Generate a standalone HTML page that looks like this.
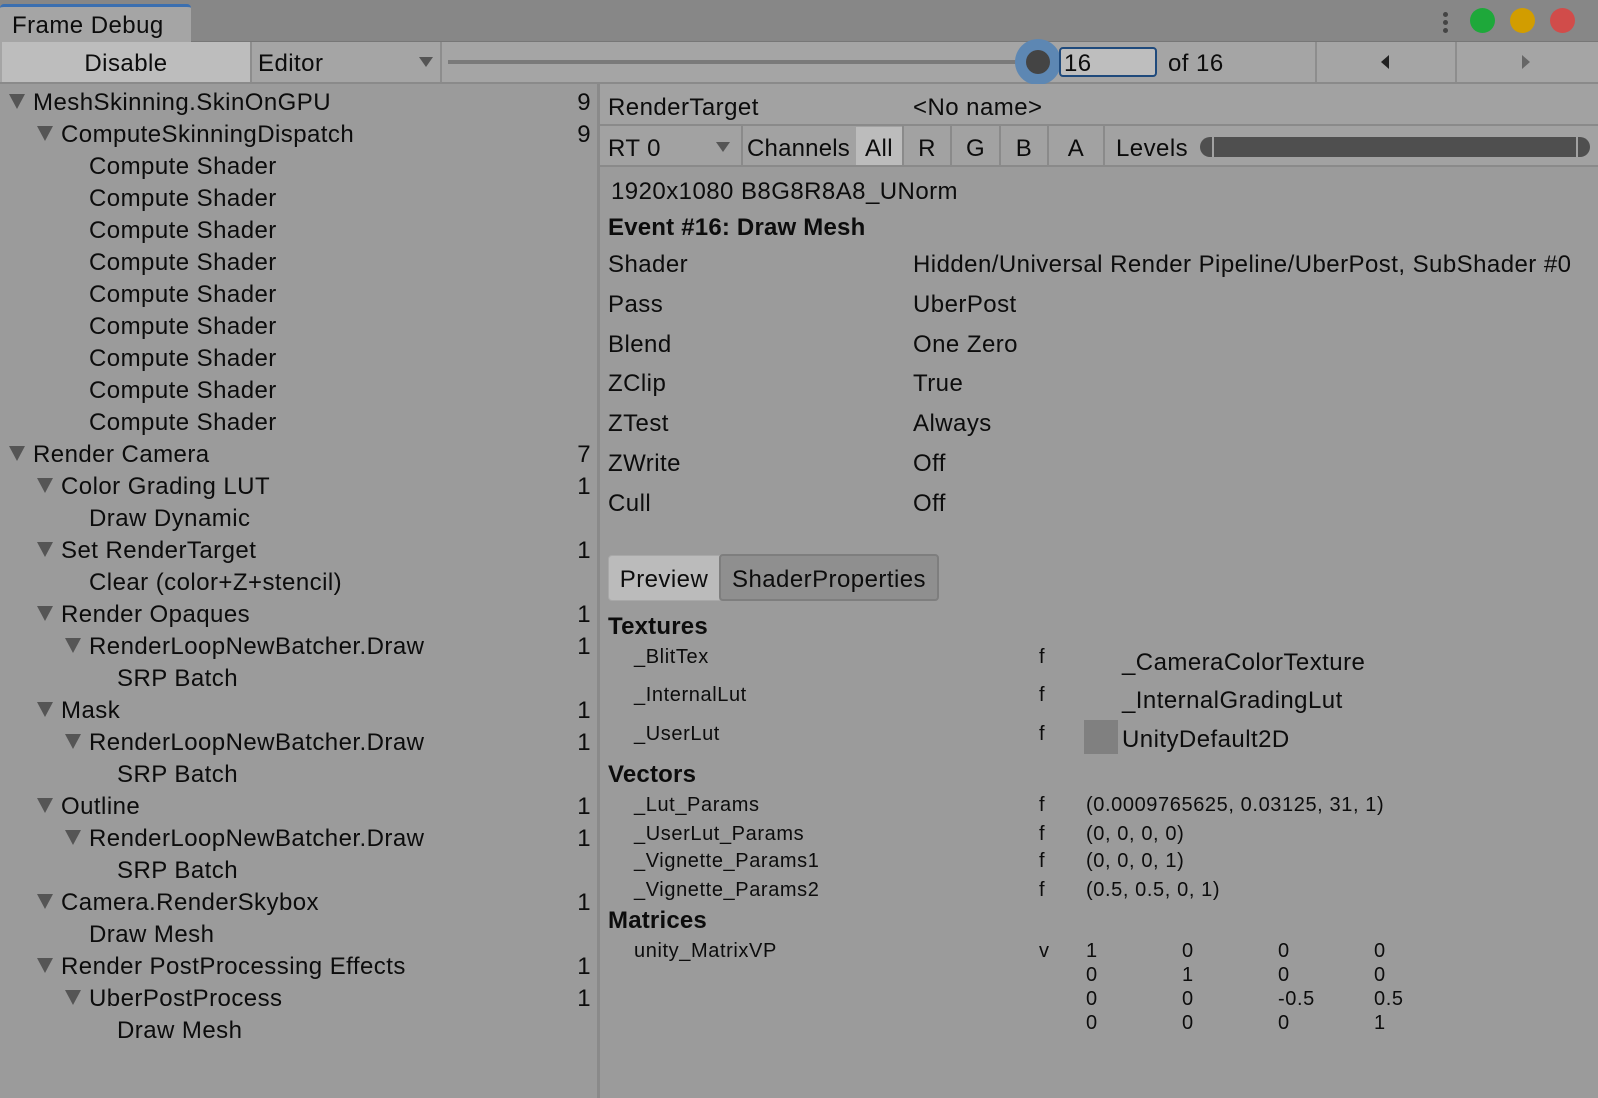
<!DOCTYPE html>
<html><head><meta charset="utf-8"><style>
*{margin:0;padding:0;box-sizing:border-box}
body{width:1598px;height:1098px;overflow:hidden;background:#9b9b9b;font-family:"Liberation Sans",sans-serif;color:#0c0c0c;position:relative}
.a{position:absolute}
.t{position:absolute;white-space:nowrap;line-height:30px;height:30px;transform:translateY(-44%);font-size:24px;letter-spacing:0.45px}
.s{font-size:20px;letter-spacing:0.6px}
.b{font-weight:bold;letter-spacing:0.2px}
.tri{position:absolute;width:0;height:0;border-left:8px solid transparent;border-right:8px solid transparent;border-top:15px solid #555}
.r{text-align:right}
</style></head><body>
<!-- title bar -->
<div class="a" style="left:0;top:0;width:1598px;height:42px;background:#878787;border-bottom:1px solid #777"></div>
<div class="a" style="left:0;top:4px;width:191px;height:39px;background:#a5a5a5;border-top:3px solid #3b6fb0;border-radius:4px 4px 0 0"></div>
<div class="t" style="left:12px;top:24px;">Frame Debug</div>
<div class="a" style="left:1443px;top:12px;width:5px;height:5px;border-radius:50%;background:#444"></div>
<div class="a" style="left:1443px;top:20px;width:5px;height:5px;border-radius:50%;background:#444"></div>
<div class="a" style="left:1443px;top:28px;width:5px;height:5px;border-radius:50%;background:#444"></div>
<div class="a" style="left:1470px;top:8px;width:25px;height:25px;border-radius:50%;background:#1ea83a"></div>
<div class="a" style="left:1510px;top:8px;width:25px;height:25px;border-radius:50%;background:#d29d00"></div>
<div class="a" style="left:1550px;top:8px;width:25px;height:25px;border-radius:50%;background:#d14c4a"></div>
<!-- toolbar -->
<div class="a" style="left:0;top:42px;width:1598px;height:42px;background:#a5a5a5;border-bottom:2px solid #8a8a8a"></div>
<div class="a" style="left:2px;top:42px;width:248px;height:40px;background:#bdbdbd"></div>
<div class="t" style="left:2px;width:248px;text-align:center;top:62px">Disable</div>
<div class="a" style="left:250px;top:42px;width:2px;height:40px;background:#8d8d8d"></div>
<div class="t" style="left:258px;top:62px">Editor</div>
<div class="a" style="left:419px;top:57px;border-left:7px solid transparent;border-right:7px solid transparent;border-top:10px solid #555"></div>
<div class="a" style="left:440px;top:42px;width:2px;height:40px;background:#8d8d8d"></div>
<div class="a" style="left:448px;top:60px;width:580px;height:4px;background:#7a7a7a"></div>
<div class="a" style="left:1015px;top:39px;width:46px;height:46px;border-radius:50%;background:#5d87b3"></div>
<div class="a" style="left:1026px;top:50px;width:24px;height:24px;border-radius:50%;background:#444"></div>
<div class="a" style="left:1059px;top:47px;width:98px;height:30px;background:#bebebe;border:2px solid #1f4a7c;border-radius:4px"></div>
<div class="t" style="left:1064px;top:62px">16</div>
<div class="t" style="left:1168px;top:62px">of 16</div>
<div class="a" style="left:1315px;top:42px;width:2px;height:40px;background:#8d8d8d"></div>
<div class="a" style="left:1455px;top:42px;width:2px;height:40px;background:#8d8d8d"></div>
<div class="a" style="left:1381px;top:55px;border-top:7px solid transparent;border-bottom:7px solid transparent;border-right:8px solid #222"></div>
<div class="a" style="left:1522px;top:55px;border-top:7px solid transparent;border-bottom:7px solid transparent;border-left:8px solid #666"></div>
<!-- divider -->
<div class="a" style="left:597px;top:84px;width:3px;height:1014px;background:#8a8a8a"></div>
<!-- tree -->
<div class="tri" style="left:9px;top:94px"></div><div class="t" style="left:33px;top:101px">MeshSkinning.SkinOnGPU</div><div class="t r" style="left:560px;width:31px;top:101px">9</div>
<div class="tri" style="left:37px;top:126px"></div><div class="t" style="left:61px;top:133px">ComputeSkinningDispatch</div><div class="t r" style="left:560px;width:31px;top:133px">9</div>
<div class="t" style="left:89px;top:165px">Compute Shader</div>
<div class="t" style="left:89px;top:197px">Compute Shader</div>
<div class="t" style="left:89px;top:229px">Compute Shader</div>
<div class="t" style="left:89px;top:261px">Compute Shader</div>
<div class="t" style="left:89px;top:293px">Compute Shader</div>
<div class="t" style="left:89px;top:325px">Compute Shader</div>
<div class="t" style="left:89px;top:357px">Compute Shader</div>
<div class="t" style="left:89px;top:389px">Compute Shader</div>
<div class="t" style="left:89px;top:421px">Compute Shader</div>
<div class="tri" style="left:9px;top:446px"></div><div class="t" style="left:33px;top:453px">Render Camera</div><div class="t r" style="left:560px;width:31px;top:453px">7</div>
<div class="tri" style="left:37px;top:478px"></div><div class="t" style="left:61px;top:485px">Color Grading LUT</div><div class="t r" style="left:560px;width:31px;top:485px">1</div>
<div class="t" style="left:89px;top:517px">Draw Dynamic</div>
<div class="tri" style="left:37px;top:542px"></div><div class="t" style="left:61px;top:549px">Set RenderTarget</div><div class="t r" style="left:560px;width:31px;top:549px">1</div>
<div class="t" style="left:89px;top:581px">Clear (color+Z+stencil)</div>
<div class="tri" style="left:37px;top:606px"></div><div class="t" style="left:61px;top:613px">Render Opaques</div><div class="t r" style="left:560px;width:31px;top:613px">1</div>
<div class="tri" style="left:65px;top:638px"></div><div class="t" style="left:89px;top:645px">RenderLoopNewBatcher.Draw</div><div class="t r" style="left:560px;width:31px;top:645px">1</div>
<div class="t" style="left:117px;top:677px">SRP Batch</div>
<div class="tri" style="left:37px;top:702px"></div><div class="t" style="left:61px;top:709px">Mask</div><div class="t r" style="left:560px;width:31px;top:709px">1</div>
<div class="tri" style="left:65px;top:734px"></div><div class="t" style="left:89px;top:741px">RenderLoopNewBatcher.Draw</div><div class="t r" style="left:560px;width:31px;top:741px">1</div>
<div class="t" style="left:117px;top:773px">SRP Batch</div>
<div class="tri" style="left:37px;top:798px"></div><div class="t" style="left:61px;top:805px">Outline</div><div class="t r" style="left:560px;width:31px;top:805px">1</div>
<div class="tri" style="left:65px;top:830px"></div><div class="t" style="left:89px;top:837px">RenderLoopNewBatcher.Draw</div><div class="t r" style="left:560px;width:31px;top:837px">1</div>
<div class="t" style="left:117px;top:869px">SRP Batch</div>
<div class="tri" style="left:37px;top:894px"></div><div class="t" style="left:61px;top:901px">Camera.RenderSkybox</div><div class="t r" style="left:560px;width:31px;top:901px">1</div>
<div class="t" style="left:89px;top:933px">Draw Mesh</div>
<div class="tri" style="left:37px;top:958px"></div><div class="t" style="left:61px;top:965px">Render PostProcessing Effects</div><div class="t r" style="left:560px;width:31px;top:965px">1</div>
<div class="tri" style="left:65px;top:990px"></div><div class="t" style="left:89px;top:997px">UberPostProcess</div><div class="t r" style="left:560px;width:31px;top:997px">1</div>
<div class="t" style="left:117px;top:1029px">Draw Mesh</div>
<!-- right header -->
<div class="a" style="left:600px;top:84px;width:998px;height:42px;background:#a2a2a2;border-bottom:2px solid #8a8a8a"></div>
<div class="t" style="left:608px;top:106px">RenderTarget</div>
<div class="t" style="left:913px;top:106px">&lt;No name&gt;</div>
<div class="a" style="left:600px;top:126px;width:998px;height:41px;background:#a2a2a2;border-bottom:2px solid #8a8a8a"></div>
<div class="t" style="left:608px;top:147px">RT 0</div>
<div class="a" style="left:716px;top:142px;border-left:7px solid transparent;border-right:7px solid transparent;border-top:10px solid #555"></div>
<div class="a" style="left:741px;top:126px;width:2px;height:40px;background:#8a8a8a"></div>
<div class="t" style="left:747px;top:147px;letter-spacing:0.2px">Channels</div>
<div class="a" style="left:856px;top:127px;width:46px;height:38px;background:#bcbcbc"></div>
<div class="t" style="left:856px;width:46px;text-align:center;top:147px">All</div>
<div class="a" style="left:902px;top:126px;width:2px;height:40px;background:#8a8a8a"></div>
<div class="t" style="left:904px;width:46px;text-align:center;top:147px">R</div>
<div class="a" style="left:950px;top:126px;width:2px;height:40px;background:#8a8a8a"></div>
<div class="t" style="left:952px;width:47px;text-align:center;top:147px">G</div>
<div class="a" style="left:999px;top:126px;width:2px;height:40px;background:#8a8a8a"></div>
<div class="t" style="left:1001px;width:46px;text-align:center;top:147px">B</div>
<div class="a" style="left:1047px;top:126px;width:2px;height:40px;background:#8a8a8a"></div>
<div class="t" style="left:1049px;width:54px;text-align:center;top:147px">A</div>
<div class="a" style="left:1103px;top:126px;width:2px;height:40px;background:#8a8a8a"></div>
<div class="t" style="left:1116px;top:147px">Levels</div>
<div class="a" style="left:1200px;top:137px;width:390px;height:20px;background:#4f4f4f;border-radius:10px"></div>
<div class="a" style="left:1212px;top:137px;width:2px;height:20px;background:#a2a2a2"></div>
<div class="a" style="left:1576px;top:137px;width:2px;height:20px;background:#a2a2a2"></div>
<!-- details -->
<div class="t" style="left:611px;top:190px">1920x1080 B8G8R8A8_UNorm</div>
<div class="t b" style="left:608px;top:226px">Event #16: Draw Mesh</div>
<div class="t" style="left:608px;top:263px">Shader</div><div class="t" style="left:913px;top:263px">Hidden/Universal Render Pipeline/UberPost, SubShader #0</div>
<div class="t" style="left:608px;top:303px">Pass</div><div class="t" style="left:913px;top:303px">UberPost</div>
<div class="t" style="left:608px;top:343px">Blend</div><div class="t" style="left:913px;top:343px">One Zero</div>
<div class="t" style="left:608px;top:382px">ZClip</div><div class="t" style="left:913px;top:382px">True</div>
<div class="t" style="left:608px;top:422px">ZTest</div><div class="t" style="left:913px;top:422px">Always</div>
<div class="t" style="left:608px;top:462px">ZWrite</div><div class="t" style="left:913px;top:462px">Off</div>
<div class="t" style="left:608px;top:502px">Cull</div><div class="t" style="left:913px;top:502px">Off</div>
<!-- tabs -->
<div class="a" style="left:608px;top:555px;width:112px;height:46px;background:#bbbbbb;border:1px solid #a8a8a8;border-radius:4px 0 0 4px"></div>
<div class="t" style="left:608px;width:112px;text-align:center;top:578px">Preview</div>
<div class="a" style="left:719px;top:554px;width:220px;height:47px;background:#8f8f8f;border:2px solid #7e7e7e;border-radius:4px"></div>
<div class="t" style="left:719px;width:220px;text-align:center;top:578px">ShaderProperties</div>
<div class="t b" style="left:608px;top:625px">Textures</div>
<div class="t s" style="left:634px;top:655px">_BlitTex</div><div class="t s" style="left:1039px;top:655px">f</div><div class="t" style="left:1122px;top:661px">_CameraColorTexture</div>
<div class="t s" style="left:634px;top:693px">_InternalLut</div><div class="t s" style="left:1039px;top:693px">f</div><div class="t" style="left:1122px;top:699px">_InternalGradingLut</div>
<div class="t s" style="left:634px;top:732px">_UserLut</div><div class="t s" style="left:1039px;top:732px">f</div>
<div class="a" style="left:1084px;top:720px;width:34px;height:34px;background:#808080"></div>
<div class="t" style="left:1122px;top:738px">UnityDefault2D</div>
<div class="t b" style="left:608px;top:773px">Vectors</div>
<div class="t s" style="left:634px;top:803px">_Lut_Params</div><div class="t s" style="left:1039px;top:803px">f</div><div class="t s" style="left:1086px;top:803px">(0.0009765625, 0.03125, 31, 1)</div>
<div class="t s" style="left:634px;top:832px">_UserLut_Params</div><div class="t s" style="left:1039px;top:832px">f</div><div class="t s" style="left:1086px;top:832px">(0, 0, 0, 0)</div>
<div class="t s" style="left:634px;top:859px">_Vignette_Params1</div><div class="t s" style="left:1039px;top:859px">f</div><div class="t s" style="left:1086px;top:859px">(0, 0, 0, 1)</div>
<div class="t s" style="left:634px;top:888px">_Vignette_Params2</div><div class="t s" style="left:1039px;top:888px">f</div><div class="t s" style="left:1086px;top:888px">(0.5, 0.5, 0, 1)</div>
<div class="t b" style="left:608px;top:919px">Matrices</div>
<div class="t s" style="left:634px;top:949px">unity_MatrixVP</div><div class="t s" style="left:1039px;top:949px">v</div>
<div class="t s" style="left:1086px;top:949px">1</div><div class="t s" style="left:1182px;top:949px">0</div><div class="t s" style="left:1278px;top:949px">0</div><div class="t s" style="left:1374px;top:949px">0</div>
<div class="t s" style="left:1086px;top:973px">0</div><div class="t s" style="left:1182px;top:973px">1</div><div class="t s" style="left:1278px;top:973px">0</div><div class="t s" style="left:1374px;top:973px">0</div>
<div class="t s" style="left:1086px;top:997px">0</div><div class="t s" style="left:1182px;top:997px">0</div><div class="t s" style="left:1278px;top:997px">-0.5</div><div class="t s" style="left:1374px;top:997px">0.5</div>
<div class="t s" style="left:1086px;top:1021px">0</div><div class="t s" style="left:1182px;top:1021px">0</div><div class="t s" style="left:1278px;top:1021px">0</div><div class="t s" style="left:1374px;top:1021px">1</div>
</body></html>
